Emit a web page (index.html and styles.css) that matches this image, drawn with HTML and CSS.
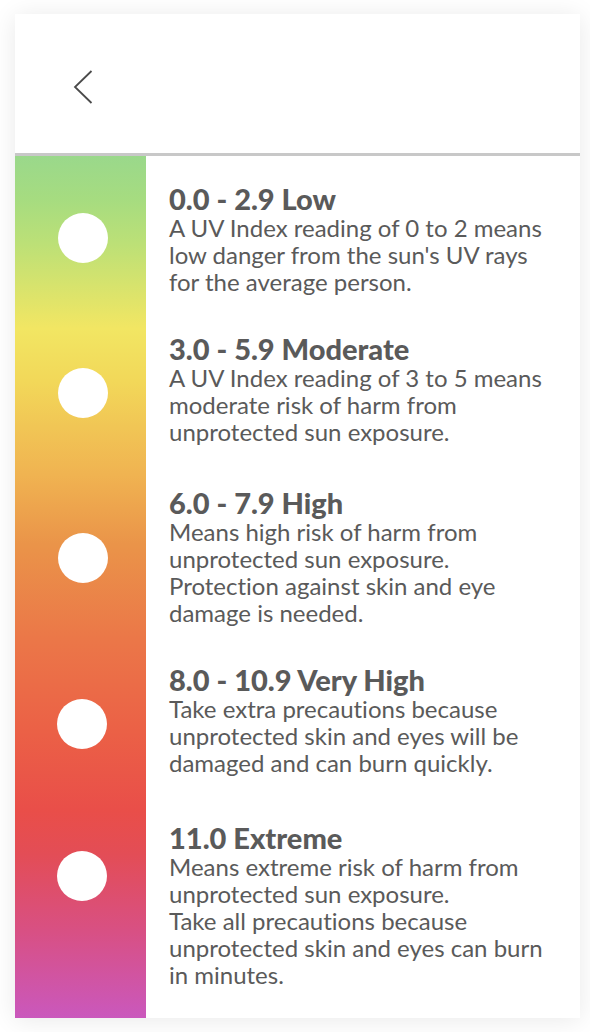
FILE: index.html
```html
<!DOCTYPE html>
<html lang="en">
<head>
<meta charset="utf-8">
<meta name="viewport" content="width=device-width, initial-scale=1">
<title>UV Index</title>
<link rel="stylesheet" href="styles.css">
</head>
<body>
<main class="screen">
  <header class="topbar">
    <button class="back" type="button" aria-label="Back">
      <svg width="20" height="34" viewBox="0 0 20 34" fill="none" stroke="#4a4a4a" stroke-width="1.8" aria-hidden="true"><path d="M18.5 1 2 17l16.500 16"/></svg>
    </button>
  </header>
  <ol class="scale">
    <li class="level low"><span class="dot"></span><section class="info"><h2>0.0 - 2.9 Low</h2><p>A UV Index reading of 0 to 2 means<br>low danger from the sun's UV rays<br>for the average person.</p></section></li>
    <li class="level moderate"><span class="dot"></span><section class="info"><h2>3.0 - 5.9 Moderate</h2><p>A UV Index reading of 3 to 5 means<br>moderate risk of harm from<br>unprotected sun exposure.</p></section></li>
    <li class="level high"><span class="dot"></span><section class="info"><h2>6.0 - 7.9 High</h2><p>Means high risk of harm from<br>unprotected sun exposure.<br>Protection against skin and eye<br>damage is needed.</p></section></li>
    <li class="level very-high"><span class="dot"></span><section class="info"><h2>8.0 - 10.9 Very High</h2><p>Take extra precautions because<br>unprotected skin and eyes will be<br>damaged and can burn quickly.</p></section></li>
    <li class="level extreme"><span class="dot"></span><section class="info"><h2>11.0 Extreme</h2><p>Means extreme risk of harm from<br>unprotected sun exposure.<br>Take all precautions because<br>unprotected skin and eyes can burn<br>in minutes.</p></section></li>
  </ol>
</main>
</body>
</html>
```
FILE: styles.css
```css
* { box-sizing: border-box; }
body {
  margin: 0;
  padding: 14px 10px 14px 15px;
  background: #fff;
  color: #5a5a5a;
  font-family: Lato, "Liberation Sans", sans-serif;
  font-variant-ligatures: none;
}
.screen {
  background: #fff;
  box-shadow: 0 2px 24px rgba(0, 0, 0, 0.09);
}
.topbar {
  padding: 56px 58px 49px;
  border-bottom: 3px solid #c8c8c8;
}
.back {
  display: block;
  padding: 0;
  border: 0;
  background: none;
}
.back svg { display: block; }
.scale {
  margin: 0;
  padding: 27px 0 30px;
  list-style: none;
  background: linear-gradient(#9ad88b 0, #a6dc80 5%, #bbe077 10%, #f2e663 20%, #f2d859 26%, #f0b351 37%, #ea9449 45%, #eb7748 56%, #eb6046 67%, #e94e49 76%, #e34d56 81%, #d85084 90%, #ca58bd 100%) 0 0 / 131px 100% no-repeat;
}
.level {
  display: grid;
  grid-template-columns: 131px 1fr;
}
.dot {
  width: 50px;
  height: 50px;
  margin: 30px 0 0 43px;
  border-radius: 50%;
  background: #fff;
}
.moderate { margin-top: 38px; }
.moderate .dot { margin-top: 35px; }
.high { margin-top: 42px; }
.high .dot { margin-top: 46px; }
.very-high { margin-top: 38px; }
.very-high .dot { margin-top: 35px; }
.extreme { margin-top: 46px; }
.extreme .dot { margin-top: 29px; }
.very-high .dot,
.extreme .dot { margin-left: 42px; }
.info { padding-left: 23px; }
h2 {
  margin: 0;
  font-size: 29px;
  line-height: 31px;
  font-weight: 900;
}
p {
  margin: 0;
  font-size: 24px;
  line-height: 27px;
}
```
